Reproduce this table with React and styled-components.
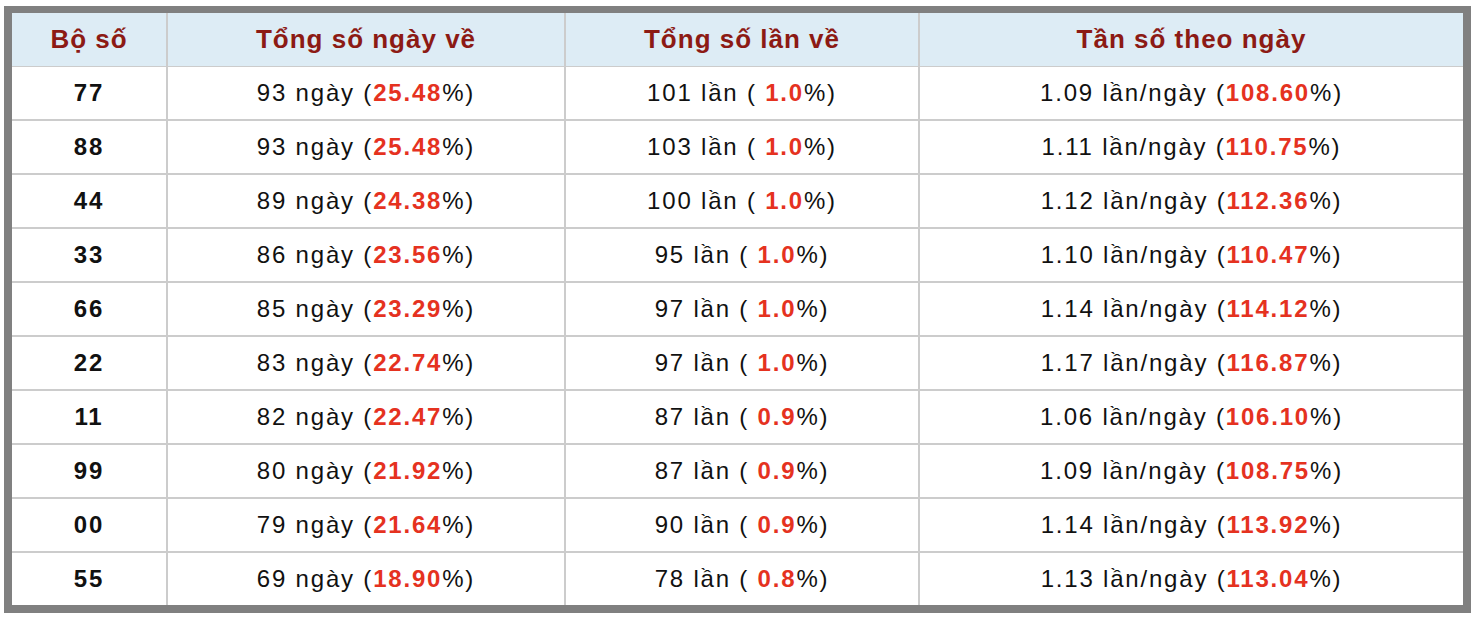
import React from 'react';
import styled, { createGlobalStyle } from 'styled-components';

const GlobalStyle = createGlobalStyle`
  body {
    margin: 0;
    background: #fff;
    font-family: "Liberation Sans", Arial, sans-serif;
  }
`;

const Page = styled.div`
  padding: 6px 9px 6px 4px;
`;

const Grid = styled.div`
  display: grid;
  grid-template-columns: 154px 396px 352px 1fr;
  grid-auto-rows: 52px;
  gap: 2px;
  background: #cccccc;
  border: 8px solid #808080;
  border-top-width: 7px;
`;

const Head = styled.div`
  height: 53px;
  border-bottom: 2px solid #cccccc;
  background: #ddecf5;
  color: #8c1a14;
  font-weight: bold;
  font-size: 26px;
  letter-spacing: 1px;
  display: flex;
  align-items: center;
  justify-content: center;
`;

const Cell = styled.div`
  background: #fff;
  color: #111;
  font-size: 24px;
  letter-spacing: 1.8px;
  font-weight: ${p => (p.$bold ? 'bold' : 'normal')};
  display: flex;
  align-items: center;
  justify-content: center;
  padding-bottom: 1px;
  white-space: pre;
`;

const Red = styled.b`
  color: #e5321f;
`;

const rows = [
  ['77', '93', '25.48', '101', '1.0', '1.09', '108.60'],
  ['88', '93', '25.48', '103', '1.0', '1.11', '110.75'],
  ['44', '89', '24.38', '100', '1.0', '1.12', '112.36'],
  ['33', '86', '23.56', '95', '1.0', '1.10', '110.47'],
  ['66', '85', '23.29', '97', '1.0', '1.14', '114.12'],
  ['22', '83', '22.74', '97', '1.0', '1.17', '116.87'],
  ['11', '82', '22.47', '87', '0.9', '1.06', '106.10'],
  ['99', '80', '21.92', '87', '0.9', '1.09', '108.75'],
  ['00', '79', '21.64', '90', '0.9', '1.14', '113.92'],
  ['55', '69', '18.90', '78', '0.8', '1.13', '113.04'],
];

export default function App() {
  return (
    <Page>
      <GlobalStyle />
      <Grid>
        <Head>Bộ số</Head>
        <Head>Tổng số ngày về</Head>
        <Head>Tổng số lần về</Head>
        <Head>Tần số theo ngày</Head>
        {rows.map(([bo, days, dPct, times, tPct, freq, fPct]) => (
          <React.Fragment key={bo}>
            <Cell $bold>{bo}</Cell>
            <Cell>{days} ngày (<Red>{dPct}</Red>%)</Cell>
            <Cell>{times} lần ( <Red>{tPct}</Red>%)</Cell>
            <Cell>{freq} lần/ngày (<Red>{fPct}</Red>%)</Cell>
          </React.Fragment>
        ))}
      </Grid>
    </Page>
  );
}
